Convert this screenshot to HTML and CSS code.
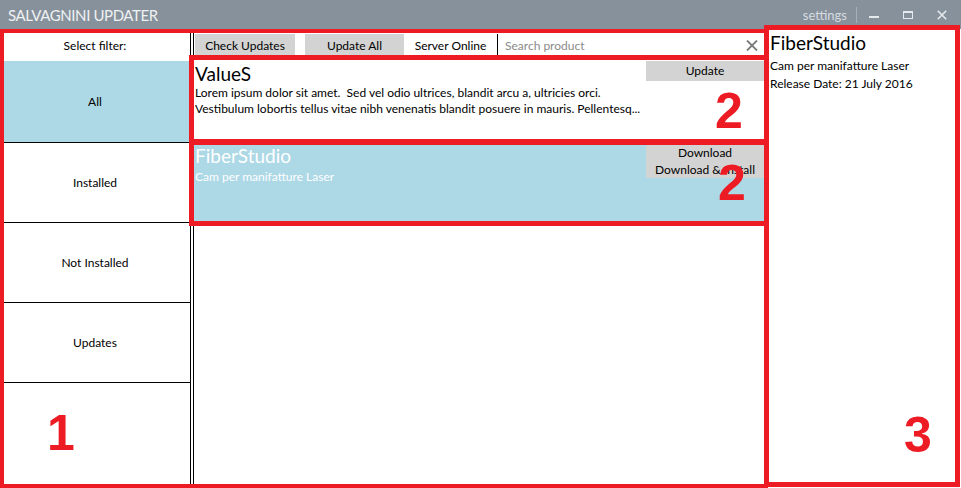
FILE: index.html
```html
<!DOCTYPE html>
<html lang="it">
<head>
<meta charset="utf-8">
<title>Salvagnini Updater</title>
<link rel="stylesheet" href="styles.css">
</head>
<body>
<div class="window">
  <header class="titlebar">
    <span class="app-title">SALVAGNINI UPDATER</span>
    <div class="win-controls">
      <span class="settings">settings</span>
      <span class="sep"></span>
      <span class="ctrl">
        <svg width="10" height="10" viewBox="0 0 10 10"><rect x="0" y="6" width="10" height="2" fill="#e6eaed"/></svg>
      </span>
      <span class="ctrl">
        <svg width="10" height="10" viewBox="0 0 10 10"><rect x="0.5" y="1.5" width="9" height="7" fill="none" stroke="#e6eaed"/><rect x="0" y="1" width="10" height="2" fill="#e6eaed"/></svg>
      </span>
      <span class="ctrl">
        <svg width="10" height="10" viewBox="0 0 10 10"><path d="M0.8 0.8 L9.2 9.2 M9.2 0.8 L0.8 9.2" stroke="#e6eaed" stroke-width="1.6" fill="none"/></svg>
      </span>
    </div>
  </header>

  <div class="main">
    <aside class="filters">
      <div class="filter-head">Select filter:</div>
      <div class="filter filter-all active">All</div>
      <div class="filter">Installed</div>
      <div class="filter">Not Installed</div>
      <div class="filter">Updates</div>
    </aside>
    <div class="gap"></div>
    <section class="center">
      <div class="toolbar">
        <div class="btn btn-check">Check Updates</div>
        <div class="btn btn-updateall">Update All</div>
        <div class="status">Server Online</div>
        <div class="search">
          <span class="search-placeholder">Search product</span>
          <svg class="search-clear" width="12" height="11" viewBox="0 0 12 11"><path d="M1 0.5 L11 10.5 M11 0.5 L1 10.5" stroke="#7a7a7a" stroke-width="1.8" fill="none"/></svg>
        </div>
      </div>
      <div class="list">
        <div class="item">
          <div class="item-main">
            <div class="item-title">ValueS</div>
            <div class="item-desc">Lorem ipsum dolor sit amet.&nbsp; Sed vel odio ultrices, blandit arcu a, ultricies orci.</div>
            <div class="item-desc">Vestibulum lobortis tellus vitae nibh venenatis blandit posuere in mauris. Pellentesq...</div>
          </div>
          <div class="item-actions">
            <div class="act act-single">Update</div>
          </div>
        </div>
        <div class="item item-selected">
          <div class="item-main">
            <div class="item-title">FiberStudio</div>
            <div class="item-sub">Cam per manifatture Laser</div>
          </div>
          <div class="item-actions">
            <div class="act act-double">
              <span>Download</span>
              <span>Download &amp; Install</span>
            </div>
          </div>
        </div>
      </div>
    </section>
    <section class="details">
      <div class="det-title">FiberStudio</div>
      <div class="det-line det-first">Cam per manifatture Laser</div>
      <div class="det-line">Release Date: 21 July 2016</div>
    </section>
  </div>

  <div class="mark mark-outer"></div>
  <div class="mark mark-values"></div>
  <div class="mark mark-fiber"></div>
  <div class="mark mark-details"></div>
  <span class="num num-1">1</span>
  <span class="num num-2a">2</span>
  <span class="num num-2b">2</span>
  <span class="num num-3">3</span>
</div>
</body>
</html>
```

FILE: styles.css
```css
* { box-sizing: border-box; }
html, body { margin: 0; padding: 0; }
body {
  font-family: Lato, "Liberation Sans", sans-serif;
  font-size: 12px;
  color: #000;
  background: #fff;
}
.window {
  position: relative;
  width: 961px;
  height: 488px;
  overflow: hidden;
  display: flex;
  flex-direction: column;
  background: #fff;
}

/* title bar */
.titlebar {
  height: 29px;
  flex: none;
  background: #87919b;
  display: flex;
  align-items: center;
  padding: 0 2px 0 8px;
  color: #eef1f3;
}
.app-title { font-size: 15px; letter-spacing: -0.4px; }
.win-controls { margin-left: auto; display: flex; align-items: center; height: 100%; }
.settings { font-size: 13px; color: #d6dbe0; }
.sep { width: 1px; height: 16px; background: #a8b0b7; margin-left: 9px; }
.ctrl { width: 34px; height: 100%; display: flex; align-items: center; justify-content: center; }

/* main grid */
.main {
  flex: 1;
  display: grid;
  grid-template-columns: 191px 2px 571px 197px;
  min-height: 0;
}
.filters { border-right: 1px solid #000; display: flex; flex-direction: column; }
.filter-head { height: 32px; display: flex; align-items: center; justify-content: center; }
.filter {
  height: 80px;
  border-bottom: 1px solid #000;
  display: flex;
  align-items: center;
  justify-content: center;
}
.filter-all { height: 82px; }
.filter.active { background: #add8e6; }

.center { border-left: 1px solid #000; display: flex; flex-direction: column; min-width: 0; }
.toolbar { height: 27px; flex: none; display: flex; align-items: flex-end; padding-left: 1px; }
.btn {
  height: 22px;
  background: #d3d3d3;
  display: flex;
  align-items: center;
  justify-content: center;
}
.btn-check { width: 100px; margin-right: 10px; }
.btn-updateall { width: 99px; }
.status {
  width: 94px;
  height: 22px;
  border-right: 1px solid #000;
  display: flex;
  align-items: center;
  justify-content: center;
}
.search {
  flex: 1;
  height: 22px;
  display: flex;
  align-items: center;
  padding: 0 6px 0 7px;
  color: #8a8a8a;
}
.search-clear { margin-left: auto; }

.list { padding-top: 1px; }
.item { height: 82px; display: flex; padding-left: 1px; }
.item-selected { background: #add8e6; color: #fff; }
.item-main { flex: 1; min-width: 0; padding-top: 6px; }
.item-title { font-size: 19px; line-height: 22px; }
.item-desc, .item-sub { line-height: 16px; white-space: nowrap; overflow: hidden; }
.item-desc:first-of-type { margin-top: 2px; }
.item-desc { margin-top: 0; }
.item-sub { margin-top: 2px; }
.item-actions { width: 118px; flex: none; padding-top: 4px; }
.act { background: #d3d3d3; color: #000; text-align: center; }
.act-single { height: 20px; line-height: 20px; }
.act-double { display: flex; flex-direction: column; height: 35px; padding-top: 1px; }
.act-double span { line-height: 17px; }

.details { padding: 3px 0 0 6px; }
.det-title { font-size: 19px; line-height: 22px; }
.det-line { line-height: 18px; }
.det-first { margin-top: 3px; }

/* red annotation overlays */
.mark { position: absolute; border: 5px solid #ed1c24; }
.mark-outer { left: 0; top: 29px; width: 768px; height: 459px; border-width: 4px; }
.mark-values { left: 189px; top: 55px; width: 580px; height: 89px; }
.mark-fiber { left: 189px; top: 140px; width: 580px; height: 86px; }
.mark-details { left: 764px; top: 25px; width: 196px; height: 462px; }
.num {
  position: absolute;
  font-family: "Liberation Sans", Arial, sans-serif;
  font-weight: bold;
  font-size: 50px;
  line-height: 50px;
  color: #ed1c24;
}
.num-1 { left: 47px; top: 408px; }
.num-2a { left: 715px; top: 86px; }
.num-2b { left: 718px; top: 158px; }
.num-3 { left: 904px; top: 410px; }
```
